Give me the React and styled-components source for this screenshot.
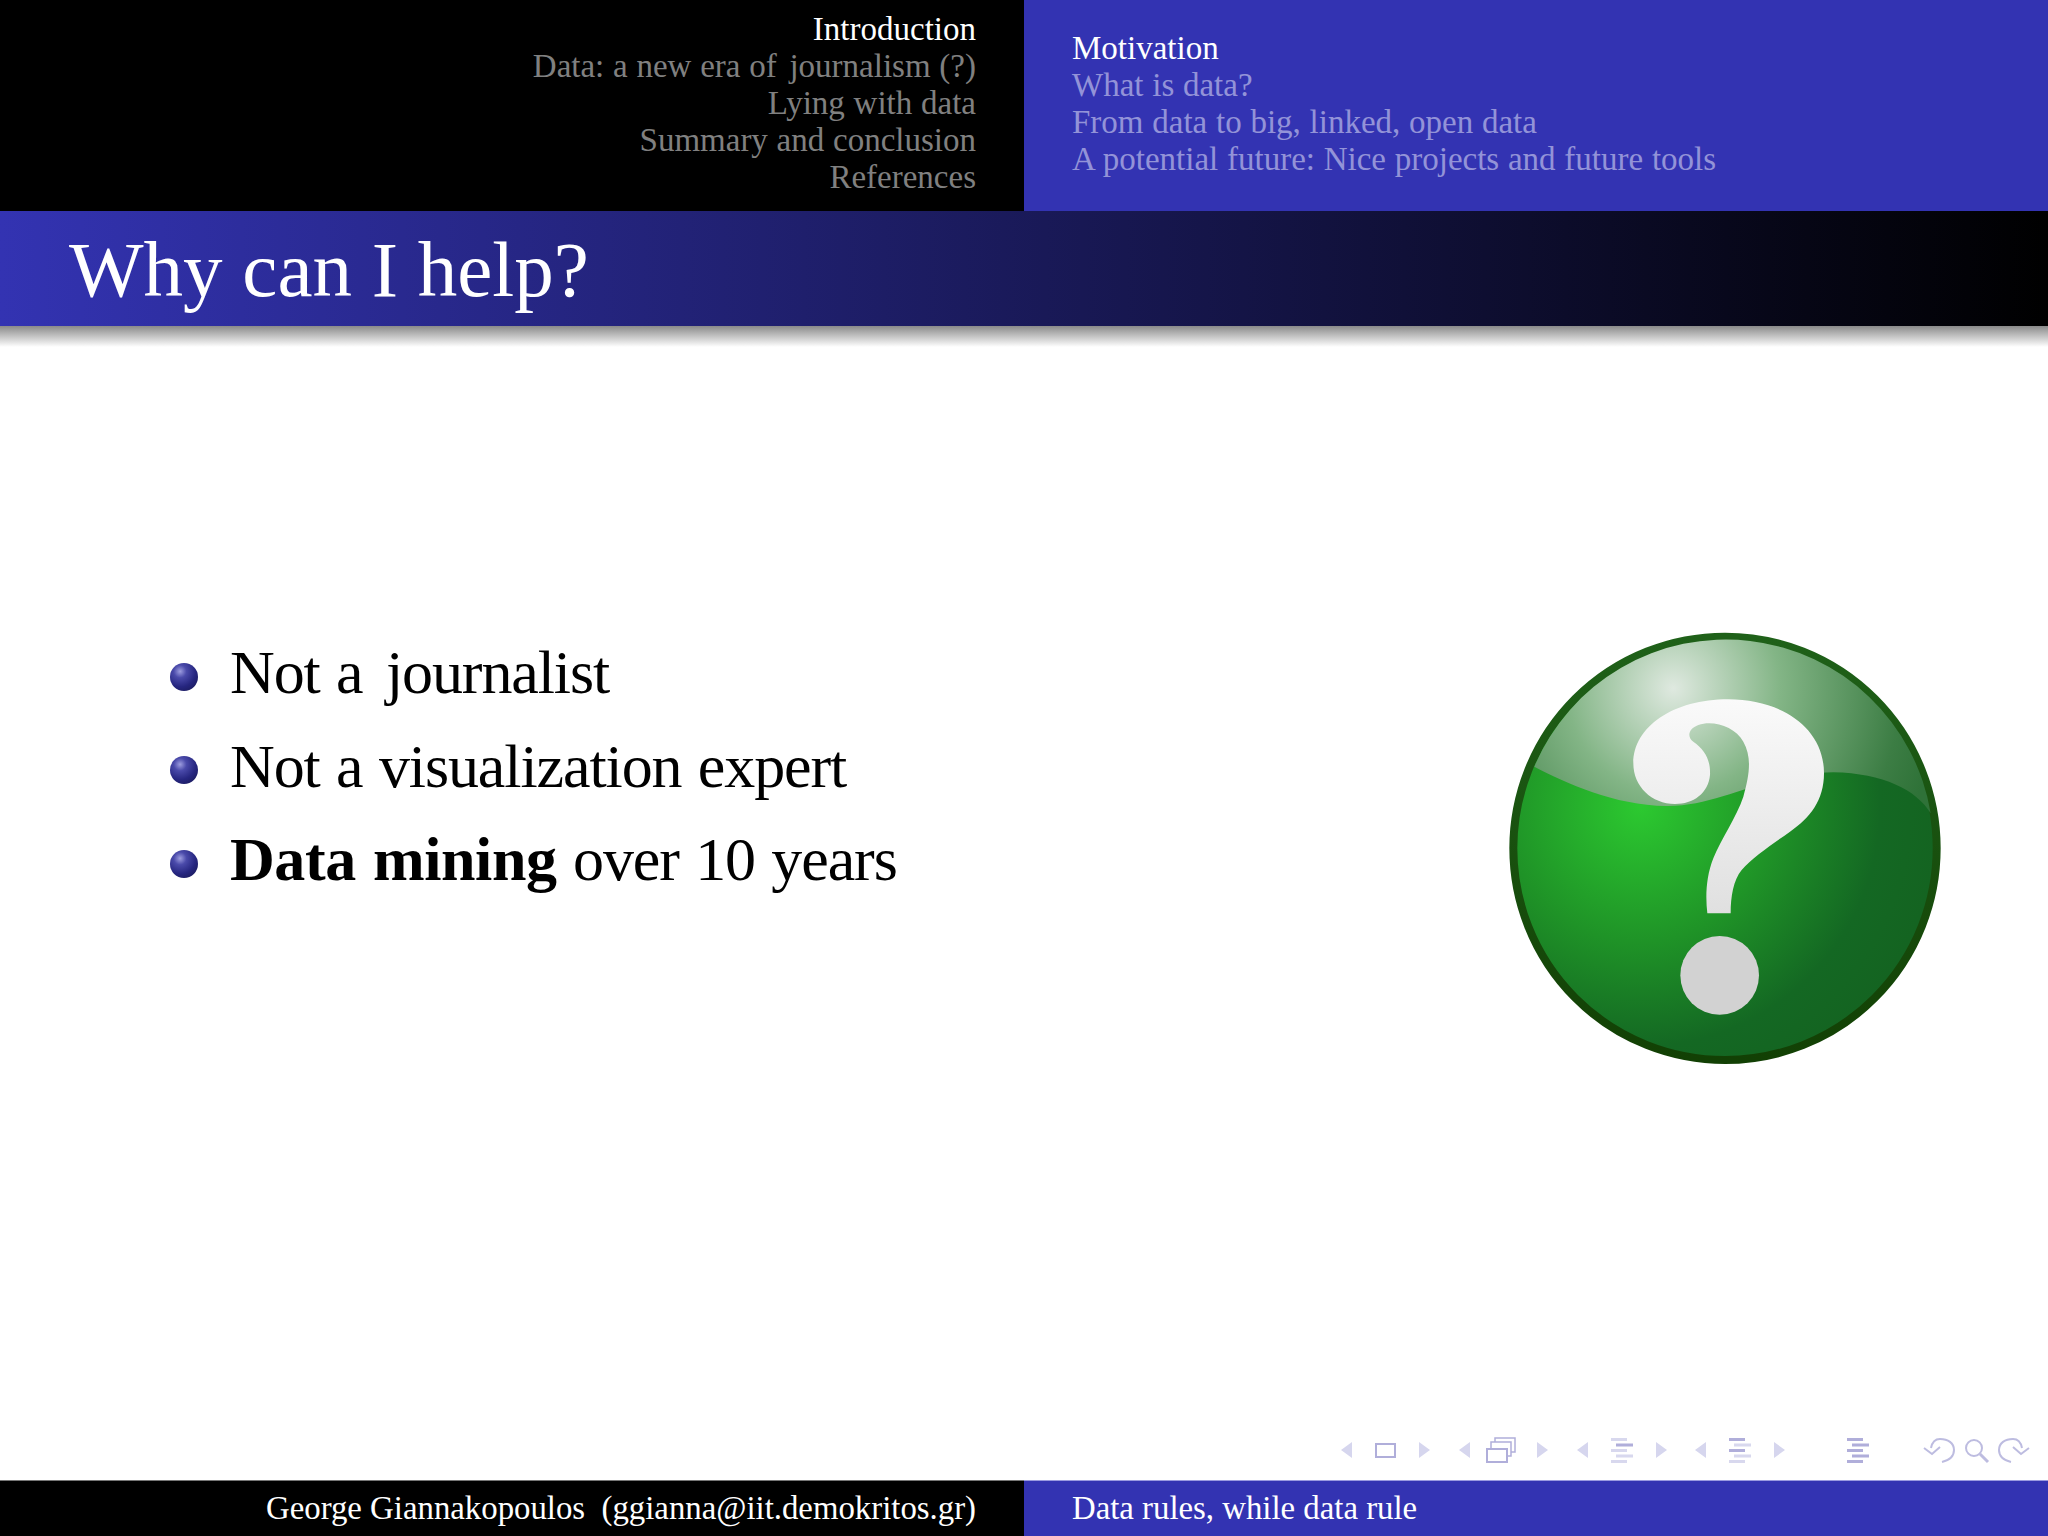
import React from "react";
import styled, { createGlobalStyle } from "styled-components";

const Global = createGlobalStyle`
    html, body {
        margin: 0;
        padding: 0;
        background: #fff;
    }
    body {
        font-family: "Liberation Serif", "Times New Roman", serif;
        overflow: hidden;
    }
`;

const Slide = styled.div`
    width: 2048px;
    height: 1536px;
    display: flex;
    flex-direction: column;
`;

const Header = styled.header`
    height: 211px;
    display: grid;
    grid-template-columns: 1024px 1024px;
`;

const SectionNav = styled.nav`
    background: #000;
    padding: 11px 48px 0 0;
    display: flex;
    flex-direction: column;
    align-items: flex-end;
`;

const SubsectionNav = styled.nav`
    background: #3333b2;
    padding: 30px 0 0 48px;
    display: flex;
    flex-direction: column;
    align-items: flex-start;
`;

const NavLine = styled.div`
    font-size: 33px;
    line-height: 37px;
    word-spacing: 0.5px;
    white-space: nowrap;
    color: ${(props) => (props.$active ? "#fff" : props.$dim)};
`;

/* the j sits further from the word before it in the slide's font */
const LooseJ = styled.span`
    margin-left: ${(props) => props.$gap}px;
`;

const TitleBar = styled.div`
    height: 115px;
    padding-left: 69px;
    display: flex;
    align-items: center;
    background: linear-gradient(to right, #3333b2, #000);
    position: relative;
    &::after {
        content: "";
        position: absolute;
        left: 0;
        right: 0;
        top: 100%;
        height: 21px;
        background: linear-gradient(to bottom, #8a8a8a, #fff);
    }
`;

const Title = styled.h1`
    margin: 2px 0 0;
    font-size: 79px;
    font-weight: 400;
    color: #fff;
`;

const Body = styled.main`
    flex: 1;
    display: flex;
    flex-direction: column;
`;

const Content = styled.div`
    display: flex;
    justify-content: space-between;
    align-items: flex-start;
    padding: 284px 68px 0 170px;
`;

const List = styled.ul`
    list-style: none;
    margin: 0;
    padding: 16px 0 0;
`;

const Item = styled.li`
    display: flex;
    align-items: center;
    gap: 32px;
    height: 93.5px;
    font-size: 62px;
    letter-spacing: -1.1px;
    word-spacing: 2px;
    color: #000;
    white-space: nowrap;
`;

const Strong = styled.b`
    letter-spacing: -0.4px;
`;

const Ball = styled.span`
    width: 28px;
    height: 28px;
    margin-top: 8px;
    border-radius: 50%;
    flex: none;
    background: radial-gradient(circle at 36% 30%, #9d9ddf 0%, #4a4aaa 24%, #262680 58%, #14144a 100%);
`;

const Strip = styled.div`
    margin-top: auto;
    padding: 0 0 14px 1335px;
    line-height: 0;
`;

const Footer = styled.footer`
    height: 56px;
    display: grid;
    grid-template-columns: 1024px 1024px;
    font-size: 32.8px;
    color: #fff;
`;

const FooterLeft = styled.div`
    background: #000;
    border-top: 1px solid #777;
    padding-right: 48px;
    display: flex;
    align-items: center;
    justify-content: flex-end;
    white-space: pre;
`;

const FooterRight = styled.div`
    background: #3333b2;
    border-top: 1px solid #9a9ae0;
    padding-left: 48px;
    display: flex;
    align-items: center;
`;

const HelpIcon = () => (
    <svg width="500" height="480" viewBox="0 0 1500 1440">
        <defs>
            <radialGradient id="base" gradientUnits="userSpaceOnUse" cx="480" cy="590" r="900">
                <stop offset="0" stopColor="#2cc930" />
                <stop offset="0.45" stopColor="#1f9327" />
                <stop offset="0.8" stopColor="#146823" />
                <stop offset="1" stopColor="#146421" />
            </radialGradient>
            <radialGradient id="gloss" gradientUnits="userSpaceOnUse" cx="580" cy="235" r="800">
                <stop offset="0" stopColor="#dfe9e0" />
                <stop offset="0.4" stopColor="#83b586" />
                <stop offset="0.85" stopColor="#3c7d44" />
                <stop offset="1" stopColor="#2f7238" />
            </radialGradient>
            <linearGradient id="rim" x1="0" y1="0" x2="0" y2="1">
                <stop offset="0" stopColor="#1f6119" />
                <stop offset="1" stopColor="#124004" />
            </linearGradient>
            <linearGradient id="mark" x1="0" y1="0" x2="0" y2="1">
                <stop offset="0" stopColor="#fafafa" />
                <stop offset="1" stopColor="#e0e0e0" />
            </linearGradient>
        </defs>
        <circle cx="735" cy="715" r="635" fill="url(#base)" stroke="url(#rim)" strokeWidth="24" />
        <path
            d="M163 470 C260 520 400 585 560 588 C720 590 850 490 1060 487 C1210 490 1310 540 1352 610 A623 623 0 0 0 163 470 Z"
            fill="url(#gloss)"
        />
        <path
            d="M682 910 C676 860 678 800 700 745 C722 690 770 620 790 560 C810 490 815 440 790 395 C765 350 700 330 655 345 C625 356 620 380 640 395 C675 420 692 450 690 495 C685 550 640 582 585 582 C515 582 460 530 460 460 C460 350 580 268 745 268 C900 268 1032 350 1032 490 C1032 570 990 625 930 665 C880 700 820 740 785 780 C760 810 752 860 752 910 Z"
            fill="url(#mark)"
        />
        <circle cx="719" cy="1096" r="118" fill="#d2d2d2" />
    </svg>
);

const DARK = "#b0aeda";
const PALE = "#d8d8ee";

const Arrow = ({ x, dir }) => (
    <polygon
        fill="#d6d6ee"
        points={
            dir === "l"
                ? `${x + 11},12 ${x + 11},28 ${x},20`
                : `${x},12 ${x},28 ${x + 11},20`
        }
    />
);

const Bars = ({ x, shades }) => (
    <g>
        {shades.map((c, i) => (
            <rect
                key={i}
                x={i % 2 ? x + 5 : x}
                y={8 + i * 5.5}
                width={i % 2 ? 17 : 16}
                height="3"
                fill={c}
            />
        ))}
    </g>
);

const NavSymbols = () => (
    <svg width="710" height="36" viewBox="0 0 710 36" fill="none">
        <Arrow x={6} dir="l" />
        <rect x="41" y="14" width="19" height="13" stroke={DARK} strokeWidth="2" />
        <Arrow x={84} dir="r" />

        <Arrow x={124} dir="l" />
        <rect x="160" y="8" width="20" height="14" stroke={DARK} strokeWidth="1.5" />
        <rect x="156" y="12" width="20" height="14" stroke={DARK} strokeWidth="1.5" fill="#fff" />
        <rect x="152" y="19" width="20" height="13" stroke={DARK} strokeWidth="2" fill="#fff" />
        <Arrow x={202} dir="r" />

        <Arrow x={242} dir="l" />
        <Bars x={276} shades={[PALE, DARK, PALE, PALE, PALE]} />
        <Arrow x={321} dir="r" />

        <Arrow x={360} dir="l" />
        <Bars x={394} shades={[DARK, PALE, DARK, PALE, PALE]} />
        <Arrow x={439} dir="r" />

        <Bars x={512} shades={[DARK, DARK, DARK, DARK, DARK]} />

        <g stroke="#bdbce0" strokeWidth="2">
            <path d="M607 32 C615 30 619 26 619 20 C619 13 613 9 605 9 C600 9 597 13 596 18" />
            <path d="M589 18 L597 24 L605 17" />
            <circle cx="639" cy="18" r="8" />
            <path d="M645 24 L653 32" strokeWidth="3" />
            <path d="M676 32 C668 30 664 26 664 20 C664 13 670 9 678 9 C683 9 686 13 687 18" />
            <path d="M694 18 L686 24 L678 17" />
        </g>
    </svg>
);

export default function App() {
    return (
        <Slide>
            <Global />
            <Header>
                <SectionNav>
                    <NavLine $active>Introduction</NavLine>
                    <NavLine $dim="#808080">Data: a new era of <LooseJ $gap={4}>journalism</LooseJ> (?)</NavLine>
                    <NavLine $dim="#808080">Lying with data</NavLine>
                    <NavLine $dim="#808080">Summary and conclusion</NavLine>
                    <NavLine $dim="#808080">References</NavLine>
                </SectionNav>
                <SubsectionNav>
                    <NavLine $active>Motivation</NavLine>
                    <NavLine $dim="#9393d8">What is data?</NavLine>
                    <NavLine $dim="#9393d8">From data to big, linked, open data</NavLine>
                    <NavLine $dim="#9393d8">A potential future: Nice projects and future tools</NavLine>
                </SubsectionNav>
            </Header>
            <TitleBar>
                <Title>Why can I help?</Title>
            </TitleBar>
            <Body>
                <Content>
                    <List>
                        <Item>
                            <Ball />
                            <span>Not a <LooseJ $gap={7}>journalist</LooseJ></span>
                        </Item>
                        <Item>
                            <Ball />
                            <span>Not a visualization expert</span>
                        </Item>
                        <Item>
                            <Ball />
                            <span><Strong>Data mining</Strong> over 10 years</span>
                        </Item>
                    </List>
                    <HelpIcon />
                </Content>
                <Strip>
                    <NavSymbols />
                </Strip>
            </Body>
            <Footer>
                <FooterLeft>George Giannakopoulos  (ggianna@iit.demokritos.gr)</FooterLeft>
                <FooterRight>Data rules, while data rule</FooterRight>
            </Footer>
        </Slide>
    );
}
